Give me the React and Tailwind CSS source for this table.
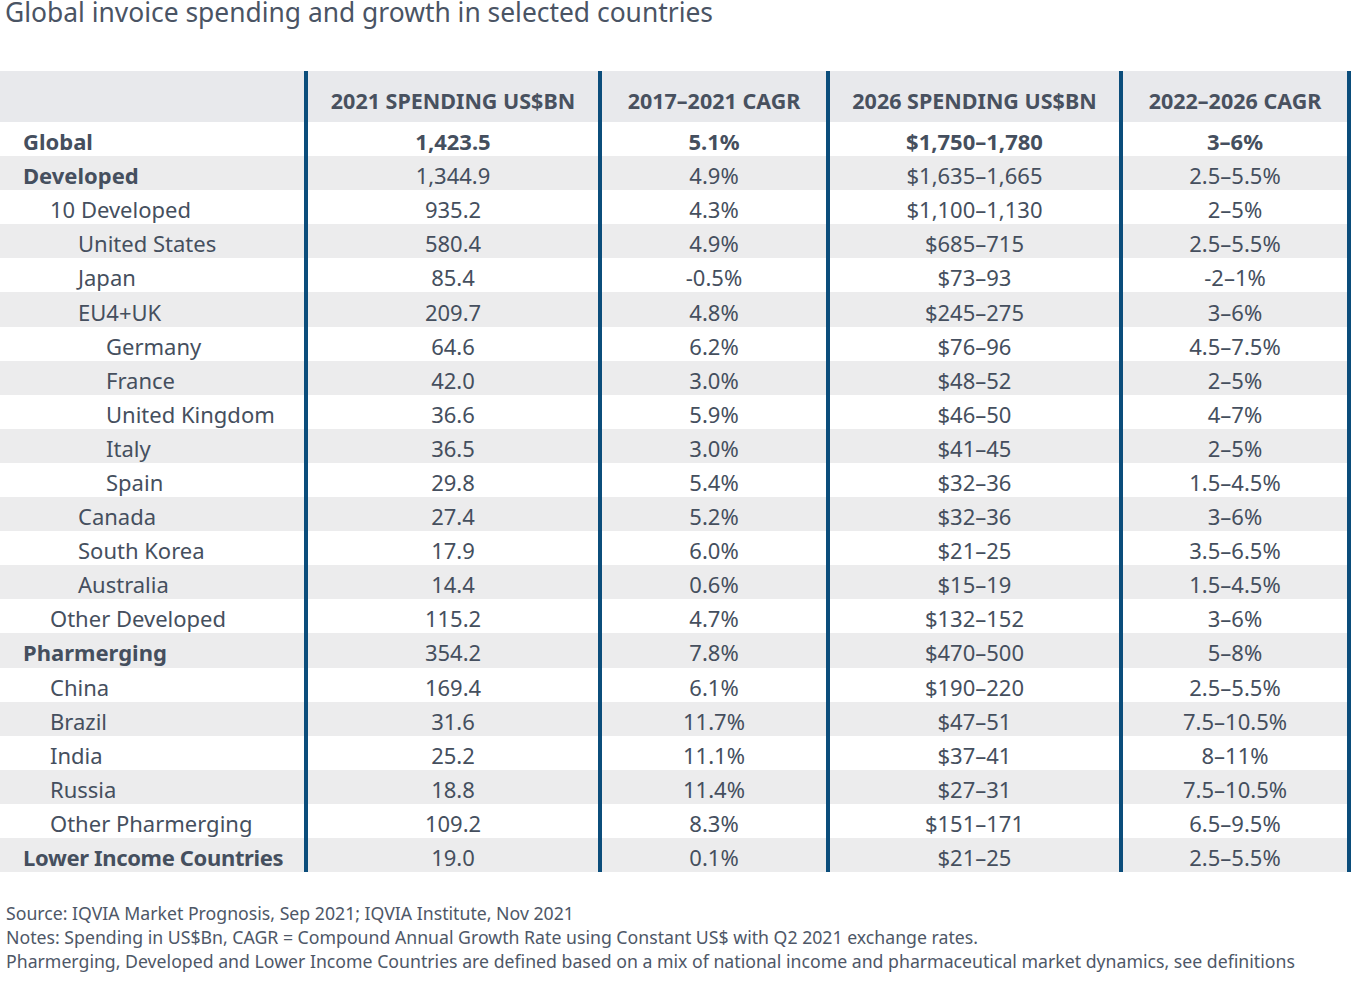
import React from "react";

const rows = [
  ["Global", 0, true, "1,423.5", "5.1%", "$1,750–1,780", "3–6%"],
  ["Developed", 0, true, "1,344.9", "4.9%", "$1,635–1,665", "2.5–5.5%"],
  ["10 Developed", 1, false, "935.2", "4.3%", "$1,100–1,130", "2–5%"],
  ["United States", 2, false, "580.4", "4.9%", "$685–715", "2.5–5.5%"],
  ["Japan", 2, false, "85.4", "-0.5%", "$73–93", "-2–1%"],
  ["EU4+UK", 2, false, "209.7", "4.8%", "$245–275", "3–6%"],
  ["Germany", 3, false, "64.6", "6.2%", "$76–96", "4.5–7.5%"],
  ["France", 3, false, "42.0", "3.0%", "$48–52", "2–5%"],
  ["United Kingdom", 3, false, "36.6", "5.9%", "$46–50", "4–7%"],
  ["Italy", 3, false, "36.5", "3.0%", "$41–45", "2–5%"],
  ["Spain", 3, false, "29.8", "5.4%", "$32–36", "1.5–4.5%"],
  ["Canada", 2, false, "27.4", "5.2%", "$32–36", "3–6%"],
  ["South Korea", 2, false, "17.9", "6.0%", "$21–25", "3.5–6.5%"],
  ["Australia", 2, false, "14.4", "0.6%", "$15–19", "1.5–4.5%"],
  ["Other Developed", 1, false, "115.2", "4.7%", "$132–152", "3–6%"],
  ["Pharmerging", 0, true, "354.2", "7.8%", "$470–500", "5–8%"],
  ["China", 1, false, "169.4", "6.1%", "$190–220", "2.5–5.5%"],
  ["Brazil", 1, false, "31.6", "11.7%", "$47–51", "7.5–10.5%"],
  ["India", 1, false, "25.2", "11.1%", "$37–41", "8–11%"],
  ["Russia", 1, false, "18.8", "11.4%", "$27–31", "7.5–10.5%"],
  ["Other Pharmerging", 1, false, "109.2", "8.3%", "$151–171", "6.5–9.5%"],
  ["Lower Income Countries", 0, true, "19.0", "0.1%", "$21–25", "2.5–5.5%"],
];

const indent = ["pl-[23px]", "pl-[50px]", "pl-[78px]", "pl-[106px]"];

export default function App() {
  return (
    <div
      className="w-[1352px] h-[994px] bg-white text-[#454f5e] overflow-hidden"
      style={{ fontFamily: '"Noto Sans", "Open Sans", sans-serif' }}
    >
      <h1 className="pl-[5px] text-[26.4px] leading-[24px] text-[#4a5464] font-normal whitespace-nowrap">
        Global invoice spending and growth in selected countries
      </h1>

      <div className="mt-[47px] w-[1351px]">
        <div className="grid grid-cols-[308px_294px_228px_293px_228px] h-[51px] text-[21.5px] font-bold text-[#48515f]">
          <div className="bg-[#e8e9ec] border-r-4 border-[#0b4d7b]" />
          <div className="bg-[#e8e9ec] border-r-4 border-[#0b4d7b] flex items-center justify-center pt-[9px] whitespace-nowrap">2021 SPENDING US$BN</div>
          <div className="bg-[#e8e9ec] border-r-4 border-[#0b4d7b] flex items-center justify-center pt-[9px] whitespace-nowrap">2017–2021 CAGR</div>
          <div className="bg-[#e8e9ec] border-r-4 border-[#0b4d7b] flex items-center justify-center pt-[9px] whitespace-nowrap">2026 SPENDING US$BN</div>
          <div className="bg-[#e8e9ec] border-r-4 border-[#0b4d7b] flex items-center justify-center pt-[9px] whitespace-nowrap">2022–2026 CAGR</div>
        </div>
        {rows.map((r, i) => {
          const bg = i % 2 === 1 ? "bg-[#ececed]" : "bg-white";
          const lw = r[2] ? "font-bold" : "font-normal";
          const track = i === rows.length - 1 ? "tracking-[-0.35px]" : "";
          const dw = i === 0 ? "font-bold" : "font-normal";
          return (
            <div
              key={i}
              className={`grid grid-cols-[308px_294px_228px_293px_228px] h-[34.1px] text-[22px] leading-[24px] ${bg}`}
            >
              <div className={`border-r-4 border-[#0b4d7b] flex items-center pt-[4px] whitespace-nowrap ${lw} ${track} ${indent[r[1]]}`}>{r[0]}</div>
              <div className={`border-r-4 border-[#0b4d7b] flex items-center justify-center pt-[4px] ${dw}`}>{r[3]}</div>
              <div className={`border-r-4 border-[#0b4d7b] flex items-center justify-center pt-[4px] ${dw}`}>{r[4]}</div>
              <div className={`border-r-4 border-[#0b4d7b] flex items-center justify-center pt-[4px] ${dw}`}>{r[5]}</div>
              <div className={`border-r-4 border-[#0b4d7b] flex items-center justify-center pt-[4px] ${dw}`}>{r[6]}</div>
            </div>
          );
        })}
      </div>

      <div className="mt-[29px] pl-[6px] text-[17.7px] leading-[24px] text-[#4e5767] whitespace-nowrap">
        <p>Source: IQVIA Market Prognosis, Sep 2021; IQVIA Institute, Nov 2021</p>
        <p>Notes: Spending in US$Bn, CAGR = Compound Annual Growth Rate using Constant US$ with Q2 2021 exchange rates.</p>
        <p>Pharmerging, Developed and Lower Income Countries are defined based on a mix of national income and pharmaceutical market dynamics, see definitions</p>
      </div>
    </div>
  );
}
